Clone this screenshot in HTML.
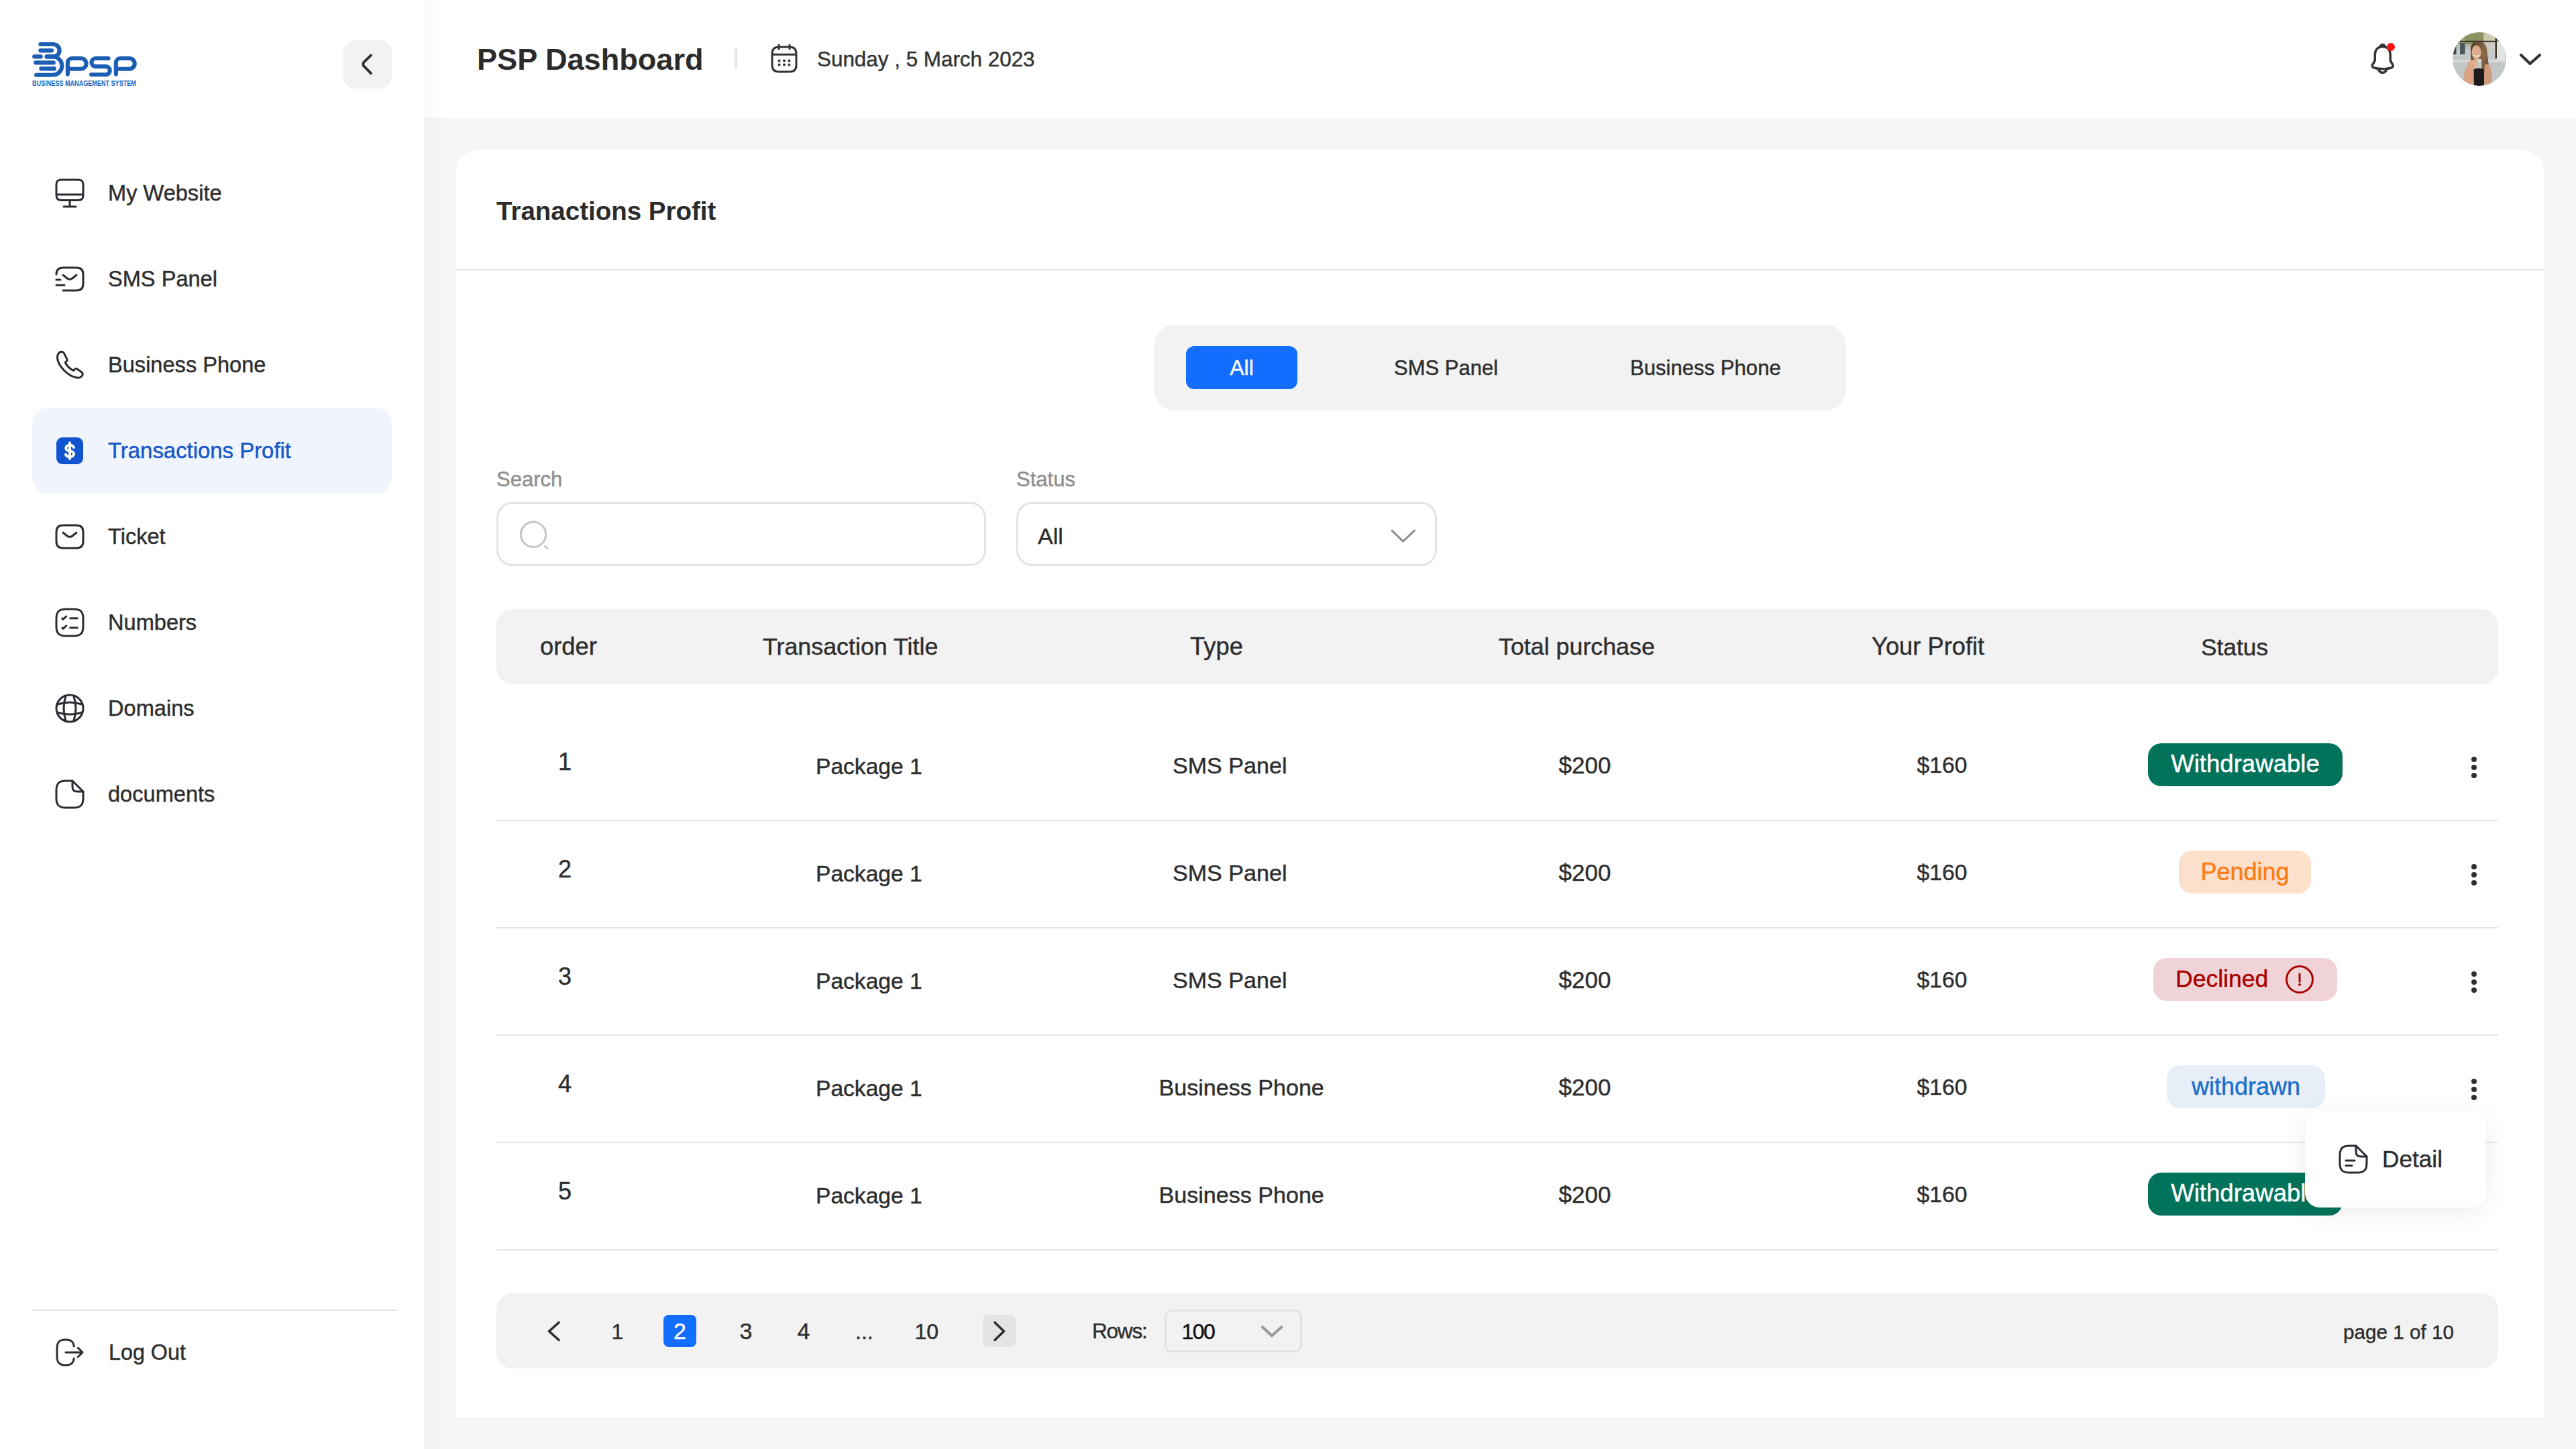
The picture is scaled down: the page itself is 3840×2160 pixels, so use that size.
<!DOCTYPE html>
<html><head><meta charset="utf-8"><title>PSP Dashboard</title>
<style>
html,body{margin:0;padding:0;}
body{width:3840px;height:2160px;position:relative;overflow:hidden;background:#f6f6f6;font-family:"Liberation Sans",sans-serif;}
.t{position:absolute;line-height:1;white-space:nowrap;-webkit-text-stroke:0.45px currentColor;}
.r{position:absolute;box-sizing:border-box;}
.i{position:absolute;overflow:visible;}
</style></head><body>

<div class="r" style="left:632px;top:0px;width:3208px;height:176px;background:#ffffff;border-radius:0px;"></div>
<div class="r" style="left:632px;top:0px;width:32px;height:2160px;background:linear-gradient(to right, rgba(0,0,0,0.018), rgba(0,0,0,0));border-radius:0px;"></div>
<div class="r" style="left:0px;top:0px;width:632px;height:2160px;background:#ffffff;border-radius:0px;"></div>
<svg class="i" style="left:40px;top:56px" width="172" height="80" viewBox="0 0 2576 1198">
<g fill="none" stroke="#1b5eb4" stroke-width="92" stroke-linecap="round" stroke-linejoin="round">
<path d="M305 150 H591 A137.5 137.5 0 0 1 591 425 H445"/>
<path d="M445 425 H579 A205 205 0 0 1 579 835 H212"/>
<path d="M305 290 H555"/>
<path d="M168 425 H310"/>
<path d="M200 560 H595"/>
<path d="M320 695 H612"/>
<path d="M912 818 V560 A95 95 0 0 1 1007 465 H1210 A117.5 117.5 0 0 1 1210 700 H980"/>
<path d="M1820 465 H1535 A90 90 0 0 0 1535 645 H1762 A91.5 91.5 0 0 1 1762 828 H1440"/>
<path d="M1990 818 V560 A95 95 0 0 1 2085 465 H2290 A117.5 117.5 0 0 1 2290 700 H2058"/>
</g>
<text x="120" y="1075" fill="#1b63bd" font-family="Liberation Sans" font-weight="700" font-size="150" textLength="2320" lengthAdjust="spacingAndGlyphs">BUSINESS MANAGEMENT SYSTEM</text>
</svg>
<div class="r" style="left:512px;top:60px;width:72px;height:72px;background:#f2f2f2;border-radius:16px;"></div>
<svg class="i" style="left:512px;top:60px" width="72" height="72" viewBox="0 0 72 72" fill="none" stroke="#2e2e2e" stroke-width="3.8" stroke-linecap="round" stroke-linejoin="round"><path d="M41 22.4 L30 33.2 Q28.6 35.7 30 38.2 L41 49.4"/></svg>
<svg class="i" style="left:80px;top:264px;" width="48" height="48" viewBox="0 0 24 24" fill="none" stroke="#292d32" stroke-width="1.5" stroke-linecap="round" stroke-linejoin="round"><path d="M6.44 2h11.11C21.11 2 22 2.89 22 6.44v6.33c0 3.56-.89 4.44-4.44 4.44H6.44C2.89 17.22 2 16.33 2 12.78V6.44C2 2.89 2.89 2 6.44 2zM12 17.22V22M2 13h20M7.5 22h9"/></svg>
<div class="t" style="left:161px;top:272.4px;font-size:32.6px;color:#2e2e2e;font-weight:400;">My Website</div>
<svg class="i" style="left:80px;top:392px;" width="48" height="48" viewBox="0 0 24 24" fill="none" stroke="#292d32" stroke-width="1.5" stroke-linecap="round" stroke-linejoin="round"><path d="M2 8.5C2 5 4 3.5 7 3.5h10c3 0 5 1.5 5 5v7c0 3.5-2 5-5 5H7"/><path d="M17 9l-3.13 2.5c-1.03.82-2.72.82-3.75 0L7 9M2 16.5h6M2 12.5h3"/></svg>
<div class="t" style="left:161px;top:400.4px;font-size:32.6px;color:#2e2e2e;font-weight:400;">SMS Panel</div>
<svg class="i" style="left:80px;top:520px;" width="48" height="48" viewBox="0 0 24 24" fill="none" stroke="#292d32" stroke-width="1.5" stroke-linecap="round" stroke-linejoin="round"><path d="M5.6 2.1C4.2 2.3 2.6 3.9 2.7 6.6C3.1 12.6 10.5 20.3 17.2 21.5C19.4 21.9 21.3 20.9 21.6 19.1C21.7 18.2 21.2 17.6 20.2 16.9L17.6 15.1C16.9 14.6 16.3 14.6 15.8 15.2L14.8 16.2C12.4 15.1 10 12.6 8.6 10.3L9.7 9.2C10.2 8.6 10.2 8.1 9.8 7.4L7.8 3.4C7.3 2.5 6.6 2 5.6 2.1Z"/></svg>
<div class="t" style="left:161px;top:528.4px;font-size:32.6px;color:#2e2e2e;font-weight:400;">Business Phone</div>
<div class="r" style="left:48px;top:608px;width:536px;height:128px;background:#f0f5fd;border-radius:24px;"></div>
<div class="r" style="left:84px;top:652px;width:40px;height:40px;background:#1054d0;border-radius:9px;"></div>
<svg class="i" style="left:84px;top:652px" width="40" height="40" viewBox="0 0 40 40" fill="none" stroke="#ffffff" stroke-width="3.9" stroke-linecap="round"><path d="M26 15C25.3 12.9 23.1 11.6 20 11.6C16.6 11.6 14.2 13.3 14.2 15.9C14.2 18.4 16.3 19.4 20 20.1C23.9 20.9 26.1 22 26.1 24.6C26.1 27.3 23.6 29 20 29C16.8 29 14.5 27.6 13.9 25.3"/><path d="M20 8.2V32"/></svg>
<div class="t" style="left:161px;top:656.1px;font-size:32.9px;color:#1757c9;font-weight:400;">Transactions Profit</div>
<svg class="i" style="left:80px;top:776px;" width="48" height="48" viewBox="0 0 24 24" fill="none" stroke="#292d32" stroke-width="1.5" stroke-linecap="round" stroke-linejoin="round"><path d="M17 20.5H7c-3 0-5-1.5-5-5v-7c0-3.5 2-5 5-5h10c3 0 5 1.5 5 5v7c0 3.5-2 5-5 5Z"/><path d="M17 9l-3.13 2.5c-1.03.82-2.72.82-3.75 0L7 9"/></svg>
<div class="t" style="left:161px;top:784.4px;font-size:32.6px;color:#2e2e2e;font-weight:400;">Ticket</div>
<svg class="i" style="left:80px;top:904px;" width="48" height="48" viewBox="0 0 24 24" fill="none" stroke="#292d32" stroke-width="1.5" stroke-linecap="round" stroke-linejoin="round"><path d="M12.37 8.88h5.25M6.38 8.88l.75.75 2.25-2.25M12.37 15.88h5.25M6.38 15.88l.75.75 2.25-2.25M9 22h6c5 0 7-2 7-7V9c0-5-2-7-7-7H9C4 2 2 4 2 9v6c0 5 2 7 7 7Z"/></svg>
<div class="t" style="left:161px;top:912.4px;font-size:32.6px;color:#2e2e2e;font-weight:400;">Numbers</div>
<svg class="i" style="left:80px;top:1032px;" width="48" height="48" viewBox="0 0 24 24" fill="none" stroke="#292d32" stroke-width="1.5" stroke-linecap="round" stroke-linejoin="round"><path d="M12 22c5.523 0 10-4.477 10-10S17.523 2 12 2 2 6.477 2 12s4.477 10 10 10Z"/><path d="M8 3h1a28.424 28.424 0 0 0 0 18H8M15 3a28.424 28.424 0 0 1 0 18"/><path d="M3 16v-1a28.424 28.424 0 0 0 18 0v1M3 9a28.424 28.424 0 0 1 18 0"/></svg>
<div class="t" style="left:161px;top:1040.4px;font-size:32.6px;color:#2e2e2e;font-weight:400;">Domains</div>
<svg class="i" style="left:80px;top:1160px;" width="48" height="48" viewBox="0 0 24 24" fill="none" stroke="#292d32" stroke-width="1.5" stroke-linecap="round" stroke-linejoin="round"><path d="M22 10v5c0 5-2 7-7 7H9c-5 0-7-2-7-7V9c0-5 2-7 7-7h5"/><path d="M22 10h-4c-3 0-4-1-4-4V2l8 8Z"/></svg>
<div class="t" style="left:161px;top:1168.4px;font-size:32.6px;color:#2e2e2e;font-weight:400;">documents</div>
<div class="r" style="left:48px;top:1952px;width:544px;height:2px;background:#e6e6e6;border-radius:0px;"></div>
<svg class="i" style="left:80px;top:1992px;" width="48" height="48" viewBox="0 0 24 24" fill="none" stroke="#292d32" stroke-width="1.5" stroke-linecap="round" stroke-linejoin="round"><path d="M15.1 7.56c-.31-3.6-2.16-5.07-6.21-5.07h-.13c-4.47 0-6.26 1.79-6.26 6.26v6.52c0 4.47 1.79 6.26 6.26 6.26h.13c4.02 0 5.87-1.45 6.2-4.99M9 12h11.38M18.15 8.65L21.5 12l-3.35 3.35"/></svg>
<div class="t" style="left:162px;top:2000.2px;font-size:32.3px;color:#2e2e2e;font-weight:400;">Log Out</div>
<div class="t" style="left:711px;top:65.8px;font-size:45.1px;color:#2b2b2b;font-weight:700;-webkit-text-stroke:0;">PSP Dashboard</div>
<div class="r" style="left:1095px;top:71px;width:4px;height:32px;background:#e6e6e6;border-radius:2px;"></div>
<svg class="i" style="left:1145px;top:63px" width="48" height="48" viewBox="0 0 24 24" fill="none" stroke="#333333" stroke-width="1.5" stroke-linecap="round" stroke-linejoin="round"><path d="M8 2v3M16 2v3M3.5 9.09h17M21 8.5V17c0 3-1.5 5-5 5H8c-3.5 0-5-2-5-5V8.5c0-3 1.5-5 5-5h8c3.5 0 5 2 5 5Z"/><path d="M15.695 13.7h.009M15.695 16.7h.009M11.995 13.7h.005M11.995 16.7h.005M8.294 13.7h.01M8.294 16.7h.01" stroke-width="2"/></svg>
<div class="t" style="left:1218px;top:72.9px;font-size:31.4px;color:#333333;font-weight:400;">Sunday , 5 March 2023</div>
<svg class="i" style="left:3520px;top:56px" width="60" height="60" viewBox="3520 56 60 60" fill="none" stroke="#333333" stroke-width="3.5" stroke-linecap="round" stroke-linejoin="round"><path d="M3551.7 69.5C3545 69.5 3540.5 74 3540.3 81.5L3540.3 88.5C3540.3 91 3539 93 3537.2 95.5C3535.5 98 3536 100.5 3539.5 101.3C3547.5 103.3 3556 103.3 3564 101.3C3567.5 100.5 3568 98 3566.3 95.5C3564.5 93 3563.2 91 3563.2 88.5L3563.2 81.5C3563 74 3558.5 69.5 3551.7 69.5Z"/><path d="M3548.5 68.8C3549.5 67 3550.5 66.6 3551.7 66.6C3553 66.6 3554 67 3555 68.8"/><path d="M3546 104.2C3547 107 3549 108.4 3551.7 108.4C3554.4 108.4 3556.5 107 3557.5 104.2"/></svg>
<div class="r" style="left:3558px;top:64px;width:12px;height:12px;border-radius:50%;background:#ff1010;"></div>
<svg class="i" style="left:3656px;top:48px" width="80" height="80" viewBox="0 0 80 80">
<defs><clipPath id="av"><circle cx="40" cy="40" r="40"/></clipPath>
<linearGradient id="avbg" x1="0" y1="0" x2="0" y2="1"><stop offset="0" stop-color="#b9b48e"/><stop offset="0.22" stop-color="#9aa07a"/><stop offset="0.4" stop-color="#c2c6c4"/><stop offset="1" stop-color="#c4c9cc"/></linearGradient>
<filter id="avb" x="-10%" y="-10%" width="120%" height="120%"><feGaussianBlur stdDeviation="0.7"/></filter><linearGradient id="hair" x1="0" y1="0" x2="1" y2="1"><stop offset="0" stop-color="#4e3826"/><stop offset="0.5" stop-color="#8a6a48"/><stop offset="1" stop-color="#5a4330"/></linearGradient></defs>
<g clip-path="url(#av)"><g filter="url(#avb)">
<rect x="-4" y="-4" width="88" height="88" fill="url(#avbg)"/>
<rect x="18" y="0" width="30" height="22" fill="#7f8a52" opacity="0.7"/>
<rect x="46" y="2" width="18" height="30" fill="#d8d2c0" opacity="0.8"/>
<rect x="0" y="18" width="80" height="18" fill="#c9cdcf" opacity="0.6"/>
<rect x="10" y="12.8" width="56" height="1.8" fill="#2e2a26"/>
<rect x="63.5" y="9" width="2.6" height="30" fill="#3a342e"/>
<rect x="11" y="16" width="7.5" height="17" fill="#4c5658"/>
<rect x="1" y="18" width="4.5" height="15" fill="#3f4849"/>
<rect x="66" y="14" width="12" height="30" fill="#e2e4e4"/>
<rect x="0" y="41" width="80" height="4" fill="#d7dadb"/>
<path d="M27 28C26 18 31 13.5 37.5 13.5C45 13.5 51 18 51.5 28C52 40 56 52 53 70L44 72L43 40L33 40L30 60C26 50 28 40 27 28Z" fill="url(#hair)"/>
<ellipse cx="35.5" cy="30" rx="7" ry="10.5" fill="#dcae8e"/>
<path d="M31 34Q35.5 38 40 34" stroke="#f4efe8" stroke-width="1.6" fill="none"/>
<path d="M16 80C15 66 19 50 25 46L33 46L38 80Z" fill="#d9a486"/>
<path d="M58 80C59 66 58 52 54 48L48 48L46 80Z" fill="#cf9a7c"/>
<path d="M22 46C25 41 33 40 38 42L38 50C32 51 27 50 22 46Z" fill="#e0ae90"/>
<path d="M32 84L31.5 56C34 53 44 53 47 56L47 84Z" fill="#1c1a1c"/>
</g></g></svg>
<svg class="i" style="left:3750px;top:74px" width="44" height="30" viewBox="0 0 44 30" fill="none" stroke="#333333" stroke-width="4.2" stroke-linecap="round" stroke-linejoin="round"><path d="M8 8L21.5 21L36 8"/></svg>
<div class="r" style="left:680px;top:224px;width:3112px;height:1888px;background:#ffffff;border-radius:0px;border-radius:32px 32px 0 0;"></div>
<div class="t" style="left:740px;top:295.9px;font-size:38.5px;color:#2b2b2b;font-weight:700;-webkit-text-stroke:0;">Tranactions Profit</div>
<div class="r" style="left:676px;top:401px;width:3116px;height:2px;background:#e4e4e4;border-radius:0px;"></div>
<div class="r" style="left:1720px;top:484px;width:1032px;height:128px;background:#f2f2f2;border-radius:32px;"></div>
<div class="r" style="left:1768px;top:516px;width:166px;height:64px;background:#136dff;border-radius:12px;"></div>
<div class="t" style="left:1351px;width:1000px;text-align:center;top:531.9px;font-size:32px;color:#ffffff;font-weight:400;">All</div>
<div class="t" style="left:2078px;top:532.8px;font-size:31px;color:#2e2e2e;font-weight:400;">SMS Panel</div>
<div class="t" style="left:2430px;top:532.7px;font-size:31.1px;color:#2e2e2e;font-weight:400;">Business Phone</div>
<div class="t" style="left:740px;top:699.3px;font-size:31px;color:#8f8f8f;font-weight:400;">Search</div>
<div class="t" style="left:1515px;top:699.3px;font-size:31px;color:#8f8f8f;font-weight:400;">Status</div>
<div class="r" style="left:740px;top:748px;width:730px;height:96px;background:#ffffff;border-radius:24px;border:3px solid #e3e3e3;"></div>
<div class="r" style="left:1515px;top:748px;width:627px;height:96px;background:#ffffff;border-radius:24px;border:3px solid #e3e3e3;"></div>
<svg class="i" style="left:760px;top:760px" width="72" height="72" viewBox="0 0 72 72" fill="none" stroke="#c6c6c6" stroke-width="3" stroke-linecap="round"><circle cx="35" cy="36.8" r="18.7"/><path d="M52.2 54.1L56 57.9"/></svg>
<div class="t" style="left:1547px;top:782.2px;font-size:34px;color:#2e2e2e;font-weight:400;">All</div>
<svg class="i" style="left:2068px;top:780px" width="48" height="36" viewBox="0 0 48 36" fill="none" stroke="#8a8a8a" stroke-width="3" stroke-linecap="round" stroke-linejoin="round"><path d="M7 11L23.5 27L40.5 11"/></svg>
<div class="r" style="left:740px;top:908px;width:2984px;height:112px;background:#f2f2f2;border-radius:24px;"></div>
<div class="t" style="left:805px;top:946.2px;font-size:36.4px;color:#2e2e2e;font-weight:400;">order</div>
<div class="t" style="left:1137px;top:946.7px;font-size:35.8px;color:#2e2e2e;font-weight:400;">Transaction Title</div>
<div class="t" style="left:1774px;top:946.2px;font-size:36.4px;color:#2e2e2e;font-weight:400;">Type</div>
<div class="t" style="left:2234px;top:946.7px;font-size:35.8px;color:#2e2e2e;font-weight:400;">Total purchase</div>
<div class="t" style="left:2790px;top:946.3px;font-size:36.3px;color:#2e2e2e;font-weight:400;">Your Profit</div>
<div class="t" style="left:3281px;top:947.1px;font-size:35.3px;color:#2e2e2e;font-weight:400;">Status</div>
<div class="t" style="left:832px;top:1117.5px;font-size:36px;color:#2e2e2e;font-weight:400;">1</div>
<div class="t" style="left:1216px;top:1125.6px;font-size:33.6px;color:#2e2e2e;font-weight:400;">Package 1</div>
<div class="t" style="left:1748px;top:1123.6px;font-size:34.1px;color:#2e2e2e;font-weight:400;">SMS Panel</div>
<div class="t" style="left:2323.5px;top:1122.9px;font-size:35px;color:#2e2e2e;font-weight:400;">$200</div>
<div class="t" style="left:2857.5px;top:1124.0px;font-size:33.7px;color:#2e2e2e;font-weight:400;">$160</div>
<div class="r" style="left:3202px;top:1108px;width:290px;height:64px;background:#00735a;border-radius:20px;"></div>
<div class="t" style="left:2847px;width:1000px;text-align:center;top:1121.0px;font-size:36.6px;color:#ffffff;font-weight:400;">Withdrawable</div>
<div class="r" style="left:3683.5px;top:1127.5px;width:8.6px;height:8.6px;border-radius:50%;background:#2e2e2e;"></div>
<div class="r" style="left:3683.5px;top:1139.7px;width:8.6px;height:8.6px;border-radius:50%;background:#2e2e2e;"></div>
<div class="r" style="left:3683.5px;top:1151.9px;width:8.6px;height:8.6px;border-radius:50%;background:#2e2e2e;"></div>
<div class="r" style="left:740px;top:1222px;width:2984px;height:2px;background:#e4e4e4;border-radius:0px;"></div>
<div class="t" style="left:832px;top:1277.5px;font-size:36px;color:#2e2e2e;font-weight:400;">2</div>
<div class="t" style="left:1216px;top:1285.6px;font-size:33.6px;color:#2e2e2e;font-weight:400;">Package 1</div>
<div class="t" style="left:1748px;top:1283.6px;font-size:34.1px;color:#2e2e2e;font-weight:400;">SMS Panel</div>
<div class="t" style="left:2323.5px;top:1282.9px;font-size:35px;color:#2e2e2e;font-weight:400;">$200</div>
<div class="t" style="left:2857.5px;top:1284.0px;font-size:33.7px;color:#2e2e2e;font-weight:400;">$160</div>
<div class="r" style="left:3248px;top:1268px;width:197px;height:64px;background:#fde0cb;border-radius:20px;"></div>
<div class="t" style="left:2846.5px;width:1000px;text-align:center;top:1281.5px;font-size:36px;color:#ff7a12;font-weight:400;">Pending</div>
<div class="r" style="left:3683.5px;top:1287.5px;width:8.6px;height:8.6px;border-radius:50%;background:#2e2e2e;"></div>
<div class="r" style="left:3683.5px;top:1299.7px;width:8.6px;height:8.6px;border-radius:50%;background:#2e2e2e;"></div>
<div class="r" style="left:3683.5px;top:1311.9px;width:8.6px;height:8.6px;border-radius:50%;background:#2e2e2e;"></div>
<div class="r" style="left:740px;top:1382px;width:2984px;height:2px;background:#e4e4e4;border-radius:0px;"></div>
<div class="t" style="left:832px;top:1437.5px;font-size:36px;color:#2e2e2e;font-weight:400;">3</div>
<div class="t" style="left:1216px;top:1445.6px;font-size:33.6px;color:#2e2e2e;font-weight:400;">Package 1</div>
<div class="t" style="left:1748px;top:1443.6px;font-size:34.1px;color:#2e2e2e;font-weight:400;">SMS Panel</div>
<div class="t" style="left:2323.5px;top:1442.9px;font-size:35px;color:#2e2e2e;font-weight:400;">$200</div>
<div class="t" style="left:2857.5px;top:1444.0px;font-size:33.7px;color:#2e2e2e;font-weight:400;">$160</div>
<div class="r" style="left:3210px;top:1428px;width:274px;height:64px;background:#efd3d6;border-radius:20px;"></div>
<div class="t" style="left:3243px;top:1441.9px;font-size:35.5px;color:#a90000;font-weight:400;">Declined</div>
<svg class="i" style="left:3404px;top:1436px" width="48" height="48" viewBox="0 0 48 48" fill="none" stroke="#a90000" stroke-width="3" stroke-linecap="round"><circle cx="24" cy="24" r="19.5"/><path d="M24 15.8V27.2"/><path d="M24 31.6V31.8" stroke-width="3.8"/></svg>
<div class="r" style="left:3683.5px;top:1447.5px;width:8.6px;height:8.6px;border-radius:50%;background:#2e2e2e;"></div>
<div class="r" style="left:3683.5px;top:1459.7px;width:8.6px;height:8.6px;border-radius:50%;background:#2e2e2e;"></div>
<div class="r" style="left:3683.5px;top:1471.9px;width:8.6px;height:8.6px;border-radius:50%;background:#2e2e2e;"></div>
<div class="r" style="left:740px;top:1542px;width:2984px;height:2px;background:#e4e4e4;border-radius:0px;"></div>
<div class="t" style="left:832px;top:1597.5px;font-size:36px;color:#2e2e2e;font-weight:400;">4</div>
<div class="t" style="left:1216px;top:1605.6px;font-size:33.6px;color:#2e2e2e;font-weight:400;">Package 1</div>
<div class="t" style="left:1727.5px;top:1603.6px;font-size:34.1px;color:#2e2e2e;font-weight:400;">Business Phone</div>
<div class="t" style="left:2323.5px;top:1602.9px;font-size:35px;color:#2e2e2e;font-weight:400;">$200</div>
<div class="t" style="left:2857.5px;top:1604.0px;font-size:33.7px;color:#2e2e2e;font-weight:400;">$160</div>
<div class="r" style="left:3230px;top:1588px;width:236px;height:64px;background:#e8eef7;border-radius:20px;"></div>
<div class="t" style="left:2848px;width:1000px;text-align:center;top:1601.5px;font-size:36px;color:#1a6fcb;font-weight:400;">withdrawn</div>
<div class="r" style="left:3683.5px;top:1607.5px;width:8.6px;height:8.6px;border-radius:50%;background:#2e2e2e;"></div>
<div class="r" style="left:3683.5px;top:1619.7px;width:8.6px;height:8.6px;border-radius:50%;background:#2e2e2e;"></div>
<div class="r" style="left:3683.5px;top:1631.9px;width:8.6px;height:8.6px;border-radius:50%;background:#2e2e2e;"></div>
<div class="r" style="left:740px;top:1702px;width:2984px;height:2px;background:#e4e4e4;border-radius:0px;"></div>
<div class="t" style="left:832px;top:1757.5px;font-size:36px;color:#2e2e2e;font-weight:400;">5</div>
<div class="t" style="left:1216px;top:1765.6px;font-size:33.6px;color:#2e2e2e;font-weight:400;">Package 1</div>
<div class="t" style="left:1727.5px;top:1763.6px;font-size:34.1px;color:#2e2e2e;font-weight:400;">Business Phone</div>
<div class="t" style="left:2323.5px;top:1762.9px;font-size:35px;color:#2e2e2e;font-weight:400;">$200</div>
<div class="t" style="left:2857.5px;top:1764.0px;font-size:33.7px;color:#2e2e2e;font-weight:400;">$160</div>
<div class="r" style="left:3202px;top:1748px;width:290px;height:64px;background:#00735a;border-radius:20px;"></div>
<div class="t" style="left:2847px;width:1000px;text-align:center;top:1761.0px;font-size:36.6px;color:#ffffff;font-weight:400;">Withdrawable</div>
<div class="r" style="left:740px;top:1862px;width:2984px;height:2px;background:#e4e4e4;border-radius:0px;"></div>
<div class="r" style="left:3436px;top:1656px;width:270px;height:144px;background:#ffffff;border-radius:22px;box-shadow:0 6px 36px rgba(0,0,0,0.075);"></div>
<svg class="i" style="left:3484px;top:1704px;" width="48" height="48" viewBox="0 0 24 24" fill="none" stroke="#292d32" stroke-width="1.5" stroke-linecap="round" stroke-linejoin="round"><path d="M22 10v5c0 5-2 7-7 7H9c-5 0-7-2-7-7V9c0-5 2-7 7-7h5"/><path d="M22 10h-4c-3 0-4-1-4-4V2l8 8Z"/><path d="M6.5 13h6.5M6.5 16.8h4.5"/></svg>
<div class="t" style="left:3551px;top:1710.2px;font-size:35.2px;color:#2e2e2e;font-weight:400;">Detail</div>
<div class="r" style="left:740px;top:1928px;width:2984px;height:112px;background:#f2f2f2;border-radius:24px;"></div>
<svg class="i" style="left:801px;top:1960px" width="48" height="48" viewBox="0 0 48 48" fill="none" stroke="#2e2e2e" stroke-width="3.6" stroke-linecap="round" stroke-linejoin="round"><path d="M32 11.5L17.5 24.5L32 37.5"/></svg>
<div class="t" style="left:911.5px;top:1968.9px;font-size:32px;color:#2e2e2e;font-weight:400;">1</div>
<div class="r" style="left:989px;top:1960px;width:49px;height:48px;background:#136dff;border-radius:8px;"></div>
<div class="t" style="left:513.5px;width:1000px;text-align:center;top:1967.2px;font-size:34px;color:#ffffff;font-weight:400;">2</div>
<div class="t" style="left:1102.5px;top:1967.2px;font-size:34px;color:#2e2e2e;font-weight:400;">3</div>
<div class="t" style="left:1188.5px;top:1967.2px;font-size:34px;color:#2e2e2e;font-weight:400;">4</div>
<div class="t" style="left:1275px;top:1968.9px;font-size:32px;color:#2e2e2e;font-weight:400;">...</div>
<div class="t" style="left:1363.5px;top:1968.9px;font-size:32px;color:#2e2e2e;font-weight:400;">10</div>
<div class="r" style="left:1465px;top:1960px;width:49px;height:48px;background:#e4e4e4;border-radius:8px;"></div>
<svg class="i" style="left:1465px;top:1960px" width="48" height="48" viewBox="0 0 48 48" fill="none" stroke="#2e2e2e" stroke-width="3.6" stroke-linecap="round" stroke-linejoin="round"><path d="M18 11.5L31.5 24.5L18 37.5"/></svg>
<div class="t" style="left:1628px;top:1969.3px;font-size:31.5px;color:#2e2e2e;font-weight:400;letter-spacing:-1.2px;">Rows:</div>
<div class="r" style="left:1736px;top:1952px;width:205px;height:64px;background:#f2f2f2;border-radius:11px;border:3.5px solid #e2e2e2;"></div>
<div class="t" style="left:1761.5px;top:1968.9px;font-size:32px;color:#111111;font-weight:400;letter-spacing:-1.6px;">100</div>
<svg class="i" style="left:1872px;top:1966px" width="48" height="36" viewBox="0 0 48 36" fill="none" stroke="#999999" stroke-width="4" stroke-linecap="round" stroke-linejoin="round"><path d="M10 12.3L24 25.3L38.3 12.3"/></svg>
<div class="t" style="left:3493px;top:1970.9px;font-size:29.7px;color:#2e2e2e;font-weight:400;">page 1 of 10</div>
</body></html>
